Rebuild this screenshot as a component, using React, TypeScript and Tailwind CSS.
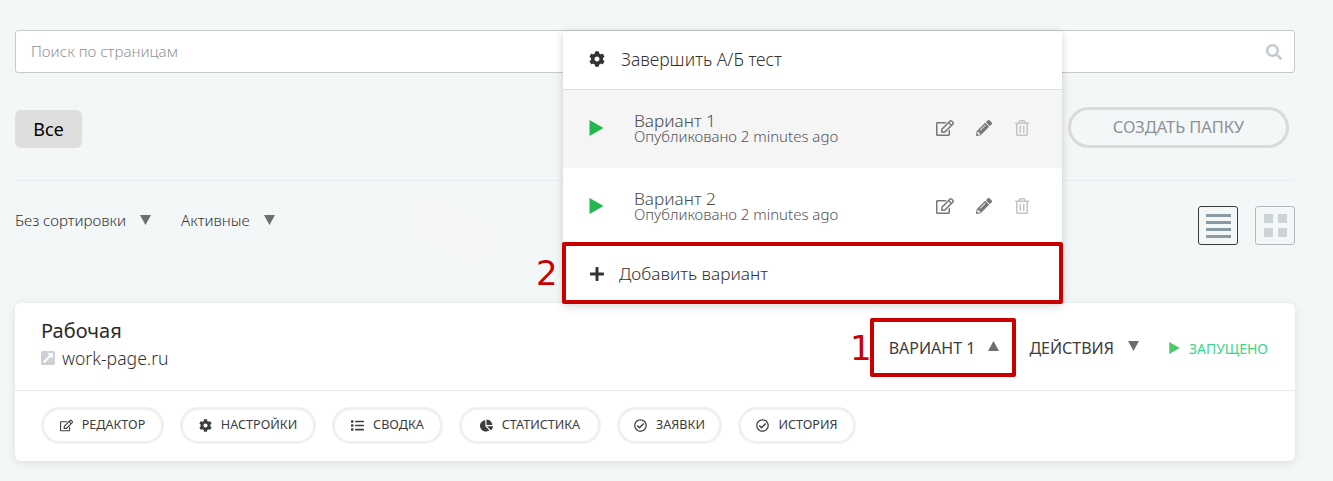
import React from 'react'
import {
  FaChartPie,
  FaCog,
  FaExternalLinkSquareAlt,
  FaList,
  FaPencilAlt,
  FaPlus,
  FaRegCheckCircle,
  FaRegEdit,
  FaRegTrashAlt,
  FaSearch,
} from 'react-icons/fa'

function Play({ className }: { className: string }): React.ReactElement {
  return (
    <svg viewBox="0 0 14 16" className={className} fill="currentColor">
      <polygon points="0,0 14,8 0,16" />
    </svg>
  )
}

function Caret({ up }: { up?: boolean }): React.ReactElement {
  return (
    <svg viewBox="0 0 10 9" className="w-[11px] h-[10px] text-[#6f6f6f]" fill="currentColor">
      <polygon points={up ? '5,0 10,9 0,9' : '0,0 10,0 5,9'} />
    </svg>
  )
}

function Variant({ name, active }: { name: string; active?: boolean }): React.ReactElement {
  return (
    <div className={`h-[78px] flex items-center pl-[26px] pr-[32px] pb-[2px] ${active ? 'bg-[#f5f5f5]' : 'bg-white'}`}>
      <Play className="w-[15px] h-[16px] text-[#22b84f] shrink-0" />
      <div className="ml-[30px] flex-1 text-[#4a4a4a] font-light">
        <div className="text-[17.2px] leading-[17px]">{name}</div>
        <div className="text-[15px] leading-[15px] text-[#555555]">Опубликовано 2 minutes ago</div>
      </div>
      <FaRegEdit className="text-[18px] text-[#777777]" />
      <FaPencilAlt className="ml-[22px] text-[16px] text-[#777777]" />
      <FaRegTrashAlt className="ml-[22px] text-[16px] text-[#c4c4c4]" />
    </div>
  )
}

const pills = [
  { label: 'РЕДАКТОР', icon: <FaRegEdit />, width: 'w-[123px]' },
  { label: 'НАСТРОЙКИ', icon: <FaCog />, width: 'w-[136px]' },
  { label: 'СВОДКА', icon: <FaList />, width: 'w-[111px]' },
  { label: 'СТАТИСТИКА', icon: <FaChartPie />, width: 'w-[142px]' },
  { label: 'ЗАЯВКИ', icon: <FaRegCheckCircle />, width: 'w-[105px]' },
  { label: 'ИСТОРИЯ', icon: <FaRegCheckCircle />, width: 'w-[118px]' },
]

export default function App(): React.ReactElement {
  return (
    <div className="relative h-[481px] overflow-hidden bg-[#f4f7f8] font-['Noto_Sans',sans-serif] text-[#333333]">
      <div className="pl-[15px] pr-[38px] pt-[30px]">
        {/* Search */}
        <div className="h-[43px] bg-white border border-[#c9c9c9] rounded-[3px] flex items-center justify-between pl-[15px] pr-[12px]">
          <span className="text-[15.2px] font-light text-[#8f9396]">Поиск по страницам</span>
          <FaSearch className="text-[16px] text-[#c3ccd2]" />
        </div>

        {/* Folders */}
        <div className="mt-[34px] h-[41px] flex items-center justify-between">
          <div className="w-[67px] h-[38px] mt-[3px] rounded-[6px] bg-[#dedede] flex items-center justify-center text-[18px] text-black">
            Все
          </div>
          <div className="w-[221px] h-[41px] mr-[6px] rounded-full border-[3px] border-[#d8dadb] flex items-center justify-center text-[16.4px] text-[#8c9296]">
            СОЗДАТЬ ПАПКУ
          </div>
        </div>

        <div className="mt-[32px] h-px bg-[#ebeef0]" />

        {/* Filters */}
        <div className="mt-[25px] h-[39px] flex items-start justify-between">
          <div className="flex items-center h-[28px] text-[15.1px] font-light text-[#333333]">
            <span>Без сортировки</span>
            <span className="ml-[14px]"><Caret /></span>
            <span className="ml-[30px]">Активные</span>
            <span className="ml-[14px]"><Caret /></span>
          </div>
          <div className="flex gap-[17px]">
            <div className="w-[40px] h-[39px] rounded-[3px] border border-[#3a3a3a] flex flex-col items-center justify-center gap-[4px]">
              <div className="w-[25px] h-[3px] bg-[#8a9ba6]" />
              <div className="w-[25px] h-[3px] bg-[#8a9ba6]" />
              <div className="w-[25px] h-[3px] bg-[#8a9ba6]" />
              <div className="w-[25px] h-[3px] bg-[#8a9ba6]" />
            </div>
            <div className="w-[40px] h-[39px] rounded-[3px] border border-[#b4b8ba] grid grid-cols-[9px_9px] grid-rows-[9px_9px] gap-[5px] place-content-center">
              <div className="bg-[#cbd3d7]" />
              <div className="bg-[#cbd3d7]" />
              <div className="bg-[#cbd3d7]" />
              <div className="bg-[#cbd3d7]" />
            </div>
          </div>
        </div>

        {/* Page card */}
        <div className="mt-[58px] h-[158px] bg-white rounded-[6px] shadow-[0_2px_8px_rgba(0,0,0,0.1)]">
          <div className="h-[88px] border-b border-[#ebebeb] flex items-center justify-between pl-[26px] pr-[27px]">
            <div className="mb-[6px]">
              <div className="text-[20px] leading-[26px] text-[#2b2b2b]">Рабочая</div>
              <div className="mt-[2px] -ml-[1px] flex items-center gap-[6px] text-[17.6px] leading-[24px] font-light text-[#333333]">
                <FaExternalLinkSquareAlt className="text-[16px] text-[#cdd0d5]" />
                work-page.ru
              </div>
            </div>
            <div className="mt-[3px] flex items-center text-[16px] text-[#3d3d3d]">
              <span>ВАРИАНТ 1</span>
              <span className="ml-[13px] mb-[4px]"><Caret up /></span>
              <span className="ml-[30px]">ДЕЙСТВИЯ</span>
              <span className="ml-[14px] mb-[4px]"><Caret /></span>
              <Play className="ml-[30px] w-[11px] h-[12px] text-[#4fc76a]" />
              <span className="ml-[9px] text-[14px] text-[#3ed58a]">ЗАПУЩЕНО</span>
            </div>
          </div>
          <div className="pl-[26px] pt-[16px] flex gap-[16px]">
            {pills.map((pill) => (
              <div
                key={pill.label}
                className={`${pill.width} h-[37px] rounded-full border-[3px] border-[#f0f0f0] flex items-center justify-center gap-[9px] text-[12.6px] text-[#3d3d3d]`}
              >
                <span className="text-[13px]">{pill.icon}</span>
                {pill.label}
              </div>
            ))}
          </div>
        </div>
      </div>

      {/* Faint smudge behind the dropdown */}
      <div className="absolute left-[408px] top-[212px] w-[88px] h-[38px] rotate-[28deg] rounded-full bg-[#f7f4f4] blur-[4px]" />

      {/* Dropdown */}
      <div className="absolute left-[563px] top-[31px] w-[499px] h-[273px] bg-white rounded-[3px] shadow-[0_2px_10px_rgba(0,0,0,0.18)]">
        <div className="h-[59px] pb-[2px] border-b border-[#dcdcdc] flex items-center pl-[26px] text-[17.5px] font-light text-[#333333]">
          <FaCog className="text-[16px] text-[#333333]" />
          <span className="ml-[16px]">Завершить А/Б тест</span>
        </div>
        <Variant name="Вариант 1" active />
        <Variant name="Вариант 2" />
        <div className="h-[58px] pb-[2px] flex items-center pl-[26px] text-[17.3px] font-light text-[#333333]">
          <FaPlus className="text-[16px] text-[#333333]" />
          <span className="ml-[16px] -translate-x-[2px]">Добавить вариант</span>
        </div>
      </div>

      {/* Annotations */}
      <div className="absolute left-[562px] top-[242px] w-[501px] h-[62px] border-[4px] border-[#c80000] rounded-[2px]" />
      <div className="absolute left-[870px] top-[318px] w-[146px] h-[59px] border-[4px] border-[#c80000] rounded-[2px]" />
      <div className="absolute left-[536px] top-[253px] text-[34px] leading-[40px] text-[#c80000] font-['DejaVu_Sans',sans-serif]">2</div>
      <div className="absolute left-[850px] top-[328px] text-[34px] leading-[40px] text-[#c80000] font-['DejaVu_Sans',sans-serif]">1</div>
    </div>
  )
}
